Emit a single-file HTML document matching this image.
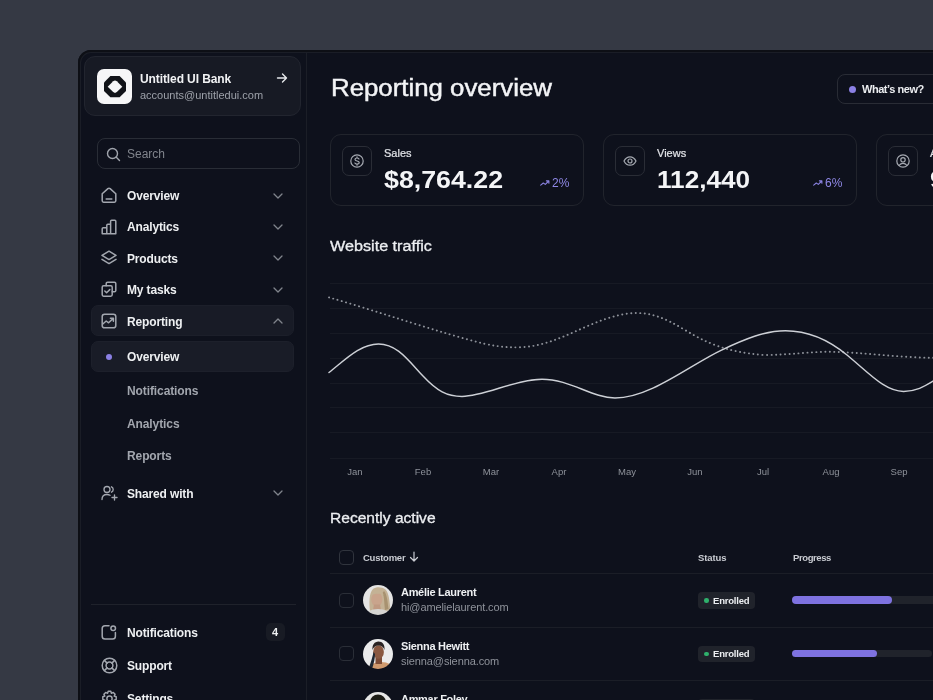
<!DOCTYPE html>
<html><head><meta charset="utf-8"><style>
html,body{margin:0;padding:0;}
body{width:933px;height:700px;overflow:hidden;background:#353944;position:relative;font-family:"Liberation Sans",sans-serif;}
.a{position:absolute;}
.t{position:absolute;white-space:nowrap;line-height:1;will-change:transform;}
#frame{position:absolute;left:78px;top:50px;width:900px;height:700px;background:#0e111c;border-radius:13px;box-shadow:inset 0 0 0 2px #0d0f15, inset 0 0 0 3px #1a1d26;}
#sbline{position:absolute;left:306px;top:52px;width:1px;height:650px;background:#1b1e27;}
</style></head><body>
<div id="frame"></div>
<div id="sbline"></div>
<div class="a" style="left:84px;top:56px;width:217px;height:60px;background:#171a24;border:1px solid #22252f;box-sizing:border-box;border-radius:11px;"></div>
<div class="a" style="left:97px;top:69px;width:35px;height:35px;background:#f6f6f7;border-radius:7px;"></div>
<svg class="a" style="left:104px;top:75.5px" width="22" height="22" viewBox="0 0 22 22" fill="none" stroke="#a3a7af" stroke-width="1.4" stroke-linecap="round" stroke-linejoin="round"><path d="M6.4 0 H15.6 L22 6.5 V14.9 L15.6 21.3 H6.4 L0 14.9 V6.5 Z" fill="#111318" stroke="none"/><path d="M3.7 10.7 L9.2 5.3 Q11 3.7 12.8 5.3 L18.3 10.7 L12.8 16.1 Q11 17.7 9.2 16.1 Z" fill="#f6f6f7" stroke="none"/></svg>
<div class="t" style="left:140.40px;top:73.14px;font-size:12px;font-weight:700;color:#f1f2f4;letter-spacing:-0.1px;">Untitled UI Bank</div>
<div class="t" style="left:140.40px;top:89.69px;font-size:11px;color:#9da1a9;">accounts@untitledui.com</div>
<svg class="a" style="left:276px;top:72px" width="12" height="12" viewBox="0 0 12 12" fill="none" stroke="#e6e8eb" stroke-width="1.4" stroke-linecap="round" stroke-linejoin="round"><path d="M1.5 6 H10.5 M6.5 2 L10.5 6 L6.5 10"/></svg>
<div class="a" style="left:97px;top:138px;width:203px;height:31px;border:1px solid #292d36;box-sizing:border-box;border-radius:8px;"></div>
<svg class="a" style="left:106px;top:147px" width="15" height="15" viewBox="0 0 15 15" fill="none" stroke="#a0a4ac" stroke-width="1.4" stroke-linecap="round" stroke-linejoin="round"><circle cx="6.5" cy="6.5" r="5"/><path d="M10.3 10.3 L13.5 13.5"/></svg>
<div class="t" style="left:127.20px;top:148.34px;font-size:12px;color:#80848c;">Search</div>
<div class="a" style="left:91px;top:305px;width:203px;height:31px;background:#181b26;border:1px solid #1c1f2a;box-sizing:border-box;border-radius:7px;"></div>
<div class="a" style="left:91px;top:341px;width:203px;height:31px;background:#191c27;border:1px solid #1d202b;box-sizing:border-box;border-radius:7px;"></div>
<svg class="a" style="left:101px;top:187px" width="16" height="16" viewBox="0 0 16 16" fill="none" stroke="#a3a7af" stroke-width="1.5" stroke-linecap="round" stroke-linejoin="round"><path d="M1.2 6.8 L6.9 1.6 Q8 0.7 9.1 1.6 L14.8 6.8 V13.8 Q14.8 15.2 13.4 15.2 H2.6 Q1.2 15.2 1.2 13.8 Z"/><path d="M5.2 12 H10.8"/></svg>
<div class="t" style="left:127.20px;top:190.04px;font-size:12px;font-weight:700;color:#eef0f2;letter-spacing:-0.15px;">Overview</div>
<svg class="a" style="left:273px;top:193px" width="10" height="6" viewBox="0 0 10 6" fill="none" stroke="#80848c" stroke-width="1.3" stroke-linecap="round" stroke-linejoin="round"><path d="M1 1 L5 5 L9 1"/></svg>
<svg class="a" style="left:101px;top:219px" width="16" height="16" viewBox="0 0 16 16" fill="none" stroke="#a3a7af" stroke-width="1.5" stroke-linecap="round" stroke-linejoin="round"><path d="M1.2 14.8 V9.8 Q1.2 8.8 2.2 8.8 H5.8 V14.8 Z M5.8 14.8 V6.2 Q5.8 5.2 6.8 5.2 H9.6 V14.8 Z M9.6 14.8 V2.2 Q9.6 1.2 10.6 1.2 H13.8 Q14.8 1.2 14.8 2.2 V14.8 Z M1.2 14.8 H14.8"/></svg>
<div class="t" style="left:127.20px;top:221.44px;font-size:12px;font-weight:700;color:#eef0f2;letter-spacing:-0.15px;">Analytics</div>
<svg class="a" style="left:273px;top:224px" width="10" height="6" viewBox="0 0 10 6" fill="none" stroke="#80848c" stroke-width="1.3" stroke-linecap="round" stroke-linejoin="round"><path d="M1 1 L5 5 L9 1"/></svg>
<svg class="a" style="left:101px;top:250px" width="16" height="16" viewBox="0 0 16 16" fill="none" stroke="#a3a7af" stroke-width="1.5" stroke-linecap="round" stroke-linejoin="round"><path d="M8 1.2 L15 5.4 L8 9.6 L1 5.4 Z"/><path d="M1 9.4 L8 13.6 L15 9.4"/></svg>
<div class="t" style="left:127.20px;top:252.84px;font-size:12px;font-weight:700;color:#eef0f2;letter-spacing:-0.15px;">Products</div>
<svg class="a" style="left:273px;top:255px" width="10" height="6" viewBox="0 0 10 6" fill="none" stroke="#80848c" stroke-width="1.3" stroke-linecap="round" stroke-linejoin="round"><path d="M1 1 L5 5 L9 1"/></svg>
<svg class="a" style="left:101px;top:281px" width="16" height="16" viewBox="0 0 16 16" fill="none" stroke="#a3a7af" stroke-width="1.5" stroke-linecap="round" stroke-linejoin="round"><path d="M5.2 4.8 V2.6 Q5.2 1.2 6.6 1.2 H13.4 Q14.8 1.2 14.8 2.6 V9.4 Q14.8 10.8 13.4 10.8 H11.2"/><rect x="1.2" y="4.8" width="10" height="10.4" rx="1.4"/><path d="M3.8 10 L5.6 11.8 L8.8 8.6"/></svg>
<div class="t" style="left:127.20px;top:284.24px;font-size:12px;font-weight:700;color:#eef0f2;letter-spacing:-0.15px;">My tasks</div>
<svg class="a" style="left:273px;top:287px" width="10" height="6" viewBox="0 0 10 6" fill="none" stroke="#80848c" stroke-width="1.3" stroke-linecap="round" stroke-linejoin="round"><path d="M1 1 L5 5 L9 1"/></svg>
<svg class="a" style="left:101px;top:313px" width="16" height="16" viewBox="0 0 16 16" fill="none" stroke="#a3a7af" stroke-width="1.5" stroke-linecap="round" stroke-linejoin="round"><rect x="1.2" y="1.2" width="13.6" height="13.6" rx="2.4"/><path d="M1.8 11 L5.2 8 L7.6 9.8 L12 5.6 M9.4 5.2 H12.4 V8.2"/></svg>
<div class="t" style="left:127.20px;top:315.74px;font-size:12px;font-weight:700;color:#eef0f2;letter-spacing:-0.15px;">Reporting</div>
<svg class="a" style="left:273px;top:318px" width="10" height="6" viewBox="0 0 10 6" fill="none" stroke="#80848c" stroke-width="1.3" stroke-linecap="round" stroke-linejoin="round"><path d="M1 5 L5 1 L9 5"/></svg>
<div class="a" style="left:106px;top:354px;width:6px;height:6px;background:#8b80e4;border-radius:50%;"></div>
<div class="t" style="left:127.20px;top:351.34px;font-size:12px;font-weight:700;color:#eef0f2;letter-spacing:-0.15px;">Overview</div>
<div class="t" style="left:127.20px;top:384.64px;font-size:12px;font-weight:700;color:#a2a6ae;letter-spacing:-0.1px;">Notifications</div>
<div class="t" style="left:127.20px;top:417.74px;font-size:12px;font-weight:700;color:#a2a6ae;letter-spacing:-0.1px;">Analytics</div>
<div class="t" style="left:127.20px;top:450.34px;font-size:12px;font-weight:700;color:#a2a6ae;letter-spacing:-0.1px;">Reports</div>
<svg class="a" style="left:100.7px;top:485px" width="18" height="16" viewBox="0 0 18 16" fill="none" stroke="#a3a7af" stroke-width="1.35" stroke-linecap="round" stroke-linejoin="round"><circle cx="6" cy="4.5" r="3"/><path d="M1 14.5 C1 11.2 3.2 9.5 6 9.5 C7.2 9.5 8.2 9.8 9 10.3"/><path d="M10.5 1.8 A3 3 0 0 1 10.5 7.2"/><path d="M13.5 10 V15 M11 12.5 H16"/></svg>
<div class="t" style="left:127.20px;top:488.14px;font-size:12px;font-weight:700;color:#eef0f2;letter-spacing:-0.15px;">Shared with</div>
<svg class="a" style="left:273px;top:490px" width="10" height="6" viewBox="0 0 10 6" fill="none" stroke="#80848c" stroke-width="1.3" stroke-linecap="round" stroke-linejoin="round"><path d="M1 1 L5 5 L9 1"/></svg>
<div class="a" style="left:91px;top:604px;width:205px;height:1px;background:#1f222b;"></div>
<svg class="a" style="left:101px;top:624px" width="16" height="16" viewBox="0 0 16 16" fill="none" stroke="#a3a7af" stroke-width="1.5" stroke-linecap="round" stroke-linejoin="round"><path d="M8 1.8 H4 Q1.2 1.8 1.2 4.6 V12.2 Q1.2 15 4 15 H11.6 Q14.4 15 14.4 12.2 V8.4"/><circle cx="12.2" cy="4.2" r="2.3"/></svg>
<div class="t" style="left:127.20px;top:626.84px;font-size:12px;font-weight:700;color:#eef0f2;letter-spacing:-0.15px;">Notifications</div>
<div class="a" style="left:266px;top:623px;width:19px;height:18px;background:#181b24;border-radius:5px;"></div>
<div class="t" style="left:271.50px;top:627.19px;font-size:11px;font-weight:700;color:#eef0f2;">4</div>
<svg class="a" style="left:100.5px;top:656.5px" width="17" height="17" viewBox="0 0 17 17" fill="none" stroke="#a3a7af" stroke-width="1.5" stroke-linecap="round" stroke-linejoin="round"><circle cx="8.5" cy="8.5" r="7.3"/><circle cx="8.5" cy="8.5" r="3.4"/><path d="M3.4 3.4 L6.1 6.1 M13.6 3.4 L10.9 6.1 M3.4 13.6 L6.1 10.9 M13.6 13.6 L10.9 10.9"/></svg>
<div class="t" style="left:127.20px;top:659.84px;font-size:12px;font-weight:700;color:#eef0f2;letter-spacing:-0.15px;">Support</div>
<svg class="a" style="left:100.5px;top:689.5px" width="17" height="17" viewBox="0 0 17 17" fill="none" stroke="#a3a7af" stroke-width="1.45" stroke-linecap="round" stroke-linejoin="round"><circle cx="8.5" cy="8.5" r="2.6"/><path d="M7.2 1.3 H9.8 L10.4 3.3 L12.3 2.4 L14.1 4.2 L13.2 6.1 L15.2 6.8 V9.4 L13.2 10.1 L14.1 12 L12.3 13.8 L10.4 12.9 L9.8 14.9 H7.2 L6.6 12.9 L4.7 13.8 L2.9 12 L3.8 10.1 L1.8 9.4 V6.8 L3.8 6.1 L2.9 4.2 L4.7 2.4 L6.6 3.3 Z"/></svg>
<div class="t" style="left:127.20px;top:692.84px;font-size:12px;font-weight:700;color:#eef0f2;letter-spacing:-0.15px;">Settings</div>

<div class="t" style="left:330.70px;top:77.13px;font-size:23px;color:#f3f4f6;-webkit-text-stroke:0.45px #f3f4f6;transform:scaleX(1.122);transform-origin:0 0;">Reporting overview</div>
<div class="a" style="left:837px;top:74px;width:120px;height:30px;border:1px solid #292c35;box-sizing:border-box;border-radius:8px;"></div>
<div class="a" style="left:848.5px;top:86px;width:7px;height:7px;background:#8b80e4;border-radius:50%;"></div>
<div class="t" style="left:861.80px;top:83.69px;font-size:11px;font-weight:700;color:#eceef1;letter-spacing:-0.45px;">What&rsquo;s new?</div>
<div class="a" style="left:330px;top:134px;width:254px;height:72px;border:1px solid #21242c;box-sizing:border-box;border-radius:11px;"></div>
<div class="a" style="left:341.5px;top:146px;width:30px;height:30px;border:1px solid #2a2d36;box-sizing:border-box;border-radius:7px;"></div>
<svg class="a" style="left:349.5px;top:154px" width="14" height="14" viewBox="0 0 14 14" fill="none" stroke="#a6aab2" stroke-width="1.2" stroke-linecap="round" stroke-linejoin="round"><circle cx="7" cy="7" r="6.2"/><path d="M9 5 C8.6 4.3 7.9 4 7 4 C5.8 4 5 4.6 5 5.5 C5 7.5 9.2 6.5 9.2 8.6 C9.2 9.5 8.3 10.1 7 10.1 C6 10.1 5.2 9.7 4.9 9 M7 2.8 V4 M7 10.1 V11.2"/></svg>
<div class="t" style="left:383.50px;top:148.39px;font-size:11px;color:#e2e4e8;-webkit-text-stroke:0.2px #e2e4e8;">Sales</div>
<div class="t" style="left:383.50px;top:167.58px;font-size:24px;font-weight:700;color:#f4f5f7;transform:scaleX(1.115);transform-origin:0 0;">$8,764.22</div>
<svg class="a" style="left:540px;top:180px" width="10" height="6" viewBox="0 0 10 6" fill="none" stroke="#8a82e0" stroke-width="1.1" stroke-linecap="round" stroke-linejoin="round"><path d="M0.7 5.2 L3.3 3 L5.3 4.4 L8.8 1 M6.4 0.9 H8.9 V3.2"/></svg>
<div class="t" style="left:552.20px;top:176.64px;font-size:12px;color:#8f88e6;">2%</div>
<div class="a" style="left:603px;top:134px;width:254px;height:72px;border:1px solid #21242c;box-sizing:border-box;border-radius:11px;"></div>
<div class="a" style="left:614.5px;top:146px;width:30px;height:30px;border:1px solid #2a2d36;box-sizing:border-box;border-radius:7px;"></div>
<svg class="a" style="left:622.5px;top:154px" width="14" height="14" viewBox="0 0 14 14" fill="none" stroke="#a6aab2" stroke-width="1.2" stroke-linecap="round" stroke-linejoin="round"><path d="M1 7 C2.5 4 4.5 2.8 7 2.8 C9.5 2.8 11.5 4 13 7 C11.5 10 9.5 11.2 7 11.2 C4.5 11.2 2.5 10 1 7 Z"/><circle cx="7" cy="7" r="2"/></svg>
<div class="t" style="left:656.50px;top:148.39px;font-size:11px;color:#e2e4e8;-webkit-text-stroke:0.2px #e2e4e8;">Views</div>
<div class="t" style="left:656.50px;top:167.58px;font-size:24px;font-weight:700;color:#f4f5f7;transform:scaleX(1.09);transform-origin:0 0;">112,440</div>
<svg class="a" style="left:812.5px;top:180px" width="10" height="6" viewBox="0 0 10 6" fill="none" stroke="#8a82e0" stroke-width="1.1" stroke-linecap="round" stroke-linejoin="round"><path d="M0.7 5.2 L3.3 3 L5.3 4.4 L8.8 1 M6.4 0.9 H8.9 V3.2"/></svg>
<div class="t" style="left:824.70px;top:176.64px;font-size:12px;color:#8f88e6;">6%</div>
<div class="a" style="left:876px;top:134px;width:254px;height:72px;border:1px solid #21242c;box-sizing:border-box;border-radius:11px;"></div>
<div class="a" style="left:887.5px;top:146px;width:30px;height:30px;border:1px solid #2a2d36;box-sizing:border-box;border-radius:7px;"></div>
<svg class="a" style="left:895.5px;top:154px" width="14" height="14" viewBox="0 0 14 14" fill="none" stroke="#a6aab2" stroke-width="1.2" stroke-linecap="round" stroke-linejoin="round"><circle cx="7" cy="7" r="6.2"/><circle cx="7" cy="5.8" r="2.2"/><path d="M3.3 11.3 C4.2 9.8 5.5 9.3 7 9.3 C8.5 9.3 9.8 9.8 10.7 11.3"/></svg>
<div class="t" style="left:929.50px;top:148.39px;font-size:11px;color:#e2e4e8;-webkit-text-stroke:0.2px #e2e4e8;">Active</div>
<div class="t" style="left:929.50px;top:167.58px;font-size:24px;font-weight:700;color:#f4f5f7;transform:scaleX(1.1);transform-origin:0 0;">9</div>
<div class="t" style="left:329.80px;top:239.35px;font-size:14px;color:#eceef1;-webkit-text-stroke:0.3px #eceef1;transform:scaleX(1.155);transform-origin:0 0;">Website traffic</div>
<div class="a" style="left:330px;top:283px;width:603px;height:1px;background:#171a24;"></div>
<div class="a" style="left:330px;top:308px;width:603px;height:1px;background:#171a24;"></div>
<div class="a" style="left:330px;top:333px;width:603px;height:1px;background:#171a24;"></div>
<div class="a" style="left:330px;top:358px;width:603px;height:1px;background:#171a24;"></div>
<div class="a" style="left:330px;top:383px;width:603px;height:1px;background:#171a24;"></div>
<div class="a" style="left:330px;top:407px;width:603px;height:1px;background:#171a24;"></div>
<div class="a" style="left:330px;top:432px;width:603px;height:1px;background:#171a24;"></div>
<div class="a" style="left:330px;top:458px;width:603px;height:1px;background:#171a24;"></div>
<div class="t" style="left:325.30px;width:60px;text-align:center;top:466.56px;font-size:9.5px;color:#8e929a;">Jan</div>
<div class="t" style="left:393.20px;width:60px;text-align:center;top:466.56px;font-size:9.5px;color:#8e929a;">Feb</div>
<div class="t" style="left:461.10px;width:60px;text-align:center;top:466.56px;font-size:9.5px;color:#8e929a;">Mar</div>
<div class="t" style="left:529.00px;width:60px;text-align:center;top:466.56px;font-size:9.5px;color:#8e929a;">Apr</div>
<div class="t" style="left:596.90px;width:60px;text-align:center;top:466.56px;font-size:9.5px;color:#8e929a;">May</div>
<div class="t" style="left:664.80px;width:60px;text-align:center;top:466.56px;font-size:9.5px;color:#8e929a;">Jun</div>
<div class="t" style="left:732.70px;width:60px;text-align:center;top:466.56px;font-size:9.5px;color:#8e929a;">Jul</div>
<div class="t" style="left:800.60px;width:60px;text-align:center;top:466.56px;font-size:9.5px;color:#8e929a;">Aug</div>
<div class="t" style="left:868.50px;width:60px;text-align:center;top:466.56px;font-size:9.5px;color:#8e929a;">Sep</div>
<svg class="a" style="left:0;top:0" width="933" height="700"><path d="M329 297.4 C380 312 440 333 485 343.9 C500 347 508 347.5 520 347.3 C560 346 590 318 630 313.3 C650 311.5 665 318 685 330 C705 342 725 352 763.5 355 C790 355 810 351.5 830 351.8 C860 352 900 357.8 935 357.8" fill="none" stroke="#8d9199" stroke-width="1.9" stroke-linecap="round" stroke-dasharray="0.1 4.4"/><path d="M329 372.5 C345 360 360 344 378.5 344 C397 344 408 360 423 376 C437 391 447 396.4 462 396.4 C485 396.4 515 379.2 542 379.2 C570 379.2 592 398 615 398 C650 398 690 365 721 350.3 C745 339 765 330.7 785.5 330.7 C810 330.7 830 341 847 355 C870 374 885 391.4 903.6 391.4 C917 391.4 925 386 935 380" fill="none" stroke="#cdd0d6" stroke-width="1.45" stroke-linecap="round"/></svg>
<div class="t" style="left:330.40px;top:511.05px;font-size:14px;color:#eceef1;-webkit-text-stroke:0.3px #eceef1;transform:scaleX(1.112);transform-origin:0 0;">Recently active</div>
<div class="a" style="left:338.5px;top:549.5px;width:15px;height:15px;border:1px solid #30343d;box-sizing:border-box;border-radius:4px;"></div>
<div class="t" style="left:362.90px;top:552.66px;font-size:9.5px;font-weight:700;color:#c9ccd2;letter-spacing:-0.25px;">Customer</div>
<svg class="a" style="left:409px;top:551px" width="10" height="11" viewBox="0 0 10 11" fill="none" stroke="#c9ccd2" stroke-width="1.2" stroke-linecap="round" stroke-linejoin="round"><path d="M5 1 V10 M1.5 6.5 L5 10 L8.5 6.5"/></svg>
<div class="t" style="left:698.40px;top:552.86px;font-size:9.5px;font-weight:700;color:#c9ccd2;letter-spacing:-0.1px;">Status</div>
<div class="t" style="left:792.50px;top:552.86px;font-size:9.5px;font-weight:700;color:#c9ccd2;letter-spacing:-0.4px;">Progress</div>
<div class="a" style="left:330px;top:573px;width:603px;height:1px;background:#1b1e27;"></div>
<div class="a" style="left:330px;top:627px;width:603px;height:1px;background:#1b1e27;"></div>
<div class="a" style="left:330px;top:680px;width:603px;height:1px;background:#1b1e27;"></div>
<div class="a" style="left:338.5px;top:592.5px;width:15px;height:15px;border:1px solid #2a2e37;box-sizing:border-box;border-radius:4px;"></div>
<svg class="a" style="left:362.5px;top:585px" width="30" height="30" viewBox="0 0 30 30"><defs><clipPath id="c0"><circle cx="15" cy="15" r="15"/></clipPath><filter id="f0" x="-10%" y="-10%" width="120%" height="120%"><feGaussianBlur stdDeviation="0.6"/></filter></defs><g clip-path="url(#c0)"><g filter="url(#f0)"><rect width="30" height="30" fill="#e4e4e3"/><path d="M7 26 C6 18 6 8 10 4 C13 1.5 19 1.5 22.5 4.5 C26 8 26.5 16 27.5 25 L20 27 Z" fill="#c4b295"/><path d="M21 6 C24 9 24.5 16 25.5 24 L22 25 C21 18 21.5 12 19.5 8 Z" fill="#a8926f"/><ellipse cx="13.8" cy="14.5" rx="5.6" ry="7.2" fill="#c9a48c"/><path d="M8.5 10 C9 6 13 4.5 17 5.5 C19 6.5 20 8 20.5 10 C18 8.5 13 8 8.5 10 Z" fill="#c4b295"/><path d="M11 19.5 L17 19.5 L18 25 L10 25 Z" fill="#c09a82"/><ellipse cx="15" cy="31" rx="13" ry="7" fill="#d6d5d2"/></g></g></svg>
<div class="t" style="left:401.40px;top:587.49px;font-size:11px;font-weight:700;color:#eef0f2;letter-spacing:-0.3px;">Am&eacute;lie Laurent</div>
<div class="t" style="left:401.40px;top:602.49px;font-size:11px;color:#8e929a;letter-spacing:-0.1px;">hi@amelielaurent.com</div>
<div class="a" style="left:698.4px;top:592px;width:56.5px;height:16.5px;background:#20232b;border-radius:4px;"></div>
<div class="a" style="left:704px;top:598px;width:4.5px;height:4.5px;background:#2fb16c;border-radius:50%;"></div>
<div class="t" style="left:713.40px;top:595.66px;font-size:9.5px;font-weight:700;color:#eceef1;letter-spacing:-0.2px;">Enrolled</div>
<div class="a" style="left:792px;top:596.4px;width:145px;height:7.5px;background:#20232b;border-radius:4px;"></div>
<div class="a" style="left:792px;top:596.4px;width:100.29999999999995px;height:7.5px;background:#7e72e0;border-radius:4px;"></div>
<div class="a" style="left:338.5px;top:646.0px;width:15px;height:15px;border:1px solid #2a2e37;box-sizing:border-box;border-radius:4px;"></div>
<svg class="a" style="left:362.5px;top:638.5px" width="30" height="30" viewBox="0 0 30 30"><defs><clipPath id="c1"><circle cx="15" cy="15" r="15"/></clipPath><filter id="f1" x="-10%" y="-10%" width="120%" height="120%"><feGaussianBlur stdDeviation="0.6"/></filter></defs><g clip-path="url(#c1)"><g filter="url(#f1)"><rect width="30" height="30" fill="#ebebeb"/><ellipse cx="18" cy="31" rx="13" ry="8" fill="#cf9a6e"/><path d="M12.5 17 H19 V25 H12.5 Z" fill="#7c4c36"/><ellipse cx="15.5" cy="13" rx="5.4" ry="6.8" fill="#8a5940"/><path d="M9.5 11 C9 6 11.5 2.5 15.5 2.5 C19.5 2.5 22 5.5 21.5 11 C20.5 8 18.5 6.5 15.5 6.5 C12.5 6.5 10.5 8 9.5 11 Z" fill="#2a2421"/><path d="M10.5 13 C9.5 18 8 23 5.5 30 L9 30 C11 24 12 19 12 15 Z" fill="#1f2630"/></g></g></svg>
<div class="t" style="left:401.40px;top:640.99px;font-size:11px;font-weight:700;color:#eef0f2;letter-spacing:-0.3px;">Sienna Hewitt</div>
<div class="t" style="left:401.40px;top:655.99px;font-size:11px;color:#8e929a;letter-spacing:-0.1px;">sienna@sienna.com</div>
<div class="a" style="left:698.4px;top:645.5px;width:56.5px;height:16.5px;background:#20232b;border-radius:4px;"></div>
<div class="a" style="left:704px;top:651.5px;width:4.5px;height:4.5px;background:#2fb16c;border-radius:50%;"></div>
<div class="t" style="left:713.40px;top:649.16px;font-size:9.5px;font-weight:700;color:#eceef1;letter-spacing:-0.2px;">Enrolled</div>
<div class="a" style="left:792px;top:649.9px;width:140px;height:7.5px;background:#20232b;border-radius:4px;"></div>
<div class="a" style="left:792px;top:649.9px;width:85.10000000000002px;height:7.5px;background:#7e72e0;border-radius:4px;"></div>
<div class="a" style="left:338.5px;top:699.5px;width:15px;height:15px;border:1px solid #2a2e37;box-sizing:border-box;border-radius:4px;"></div>
<svg class="a" style="left:362.5px;top:692px" width="30" height="30" viewBox="0 0 30 30"><defs><clipPath id="c2"><circle cx="15" cy="15" r="15"/></clipPath><filter id="f2" x="-10%" y="-10%" width="120%" height="120%"><feGaussianBlur stdDeviation="0.6"/></filter></defs><g clip-path="url(#c2)"><g filter="url(#f2)"><rect width="30" height="30" fill="#e6e6e6"/><ellipse cx="15" cy="10" rx="8" ry="7.5" fill="#1f1b19"/><ellipse cx="15" cy="14" rx="5.5" ry="6" fill="#5a3e30"/></g></g></svg>
<div class="t" style="left:401.40px;top:694.49px;font-size:11px;font-weight:700;color:#eef0f2;letter-spacing:-0.3px;">Ammar Foley</div>
<div class="t" style="left:401.40px;top:709.49px;font-size:11px;color:#8e929a;letter-spacing:-0.1px;">ammar@foley.com</div>
<div class="a" style="left:698.4px;top:699px;width:56.5px;height:16.5px;background:#20232b;border-radius:4px;"></div>
<div class="a" style="left:704px;top:705px;width:4.5px;height:4.5px;background:#2fb16c;border-radius:50%;"></div>
<div class="t" style="left:713.40px;top:702.66px;font-size:9.5px;font-weight:700;color:#eceef1;letter-spacing:-0.2px;">Enrolled</div>
<div class="a" style="left:792px;top:703.4px;width:145px;height:7.5px;background:#20232b;border-radius:4px;"></div>
<div class="a" style="left:792px;top:703.4px;width:58px;height:7.5px;background:#7e72e0;border-radius:4px;"></div>

</body></html>
